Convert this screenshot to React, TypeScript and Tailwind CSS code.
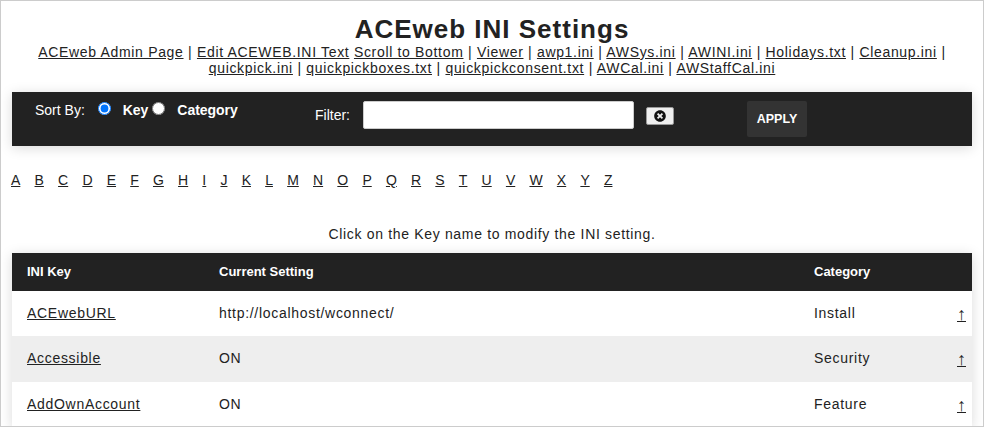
import { FaTimesCircle } from "react-icons/fa";

const moreLinks = [
  "quickpick.ini",
  "quickpickboxes.txt",
  "quickpickconsent.txt",
  "AWCal.ini",
  "AWStaffCal.ini",
];

const letters = "ABCDEFGHIJKLMNOPQRSTUVWXYZ".split("");

const rows = [
  { key: "ACEwebURL", value: "http://localhost/wconnect/", category: "Install", size: "h-[45px] bg-white" },
  { key: "Accessible", value: "ON", category: "Security", size: "h-[46px] pb-[1px] bg-[#eeeeee]" },
  { key: "AddOwnAccount", value: "ON", category: "Feature", size: "h-[45px] bg-white" },
];

export default function App() {
  return (
    <div className="h-[427px] w-[984px] overflow-hidden border border-[#cccccc] bg-white font-['Liberation_Sans',Arial,sans-serif] text-[14px] text-[#222222]">
      {/* Header */}
      <div className="pt-[13px] text-center">
        <h1 className="text-[26px] leading-[30px] font-bold tracking-[1px]">ACEweb INI Settings</h1>
        <div className="px-[20px] text-[14px] leading-[16px] tracking-[0.67px]">
          <a className="underline" href="#">ACEweb Admin Page</a> | <a className="underline" href="#">Edit ACEWEB.INI Text</a>{" "}
          <a className="underline" href="#">Scroll to Bottom</a> | <a className="underline" href="#">Viewer</a> |{" "}
          <a className="underline" href="#">awp1.ini</a> | <a className="underline" href="#">AWSys.ini</a> |{" "}
          <a className="underline" href="#">AWINI.ini</a> | <a className="underline" href="#">Holidays.txt</a> |{" "}
          <a className="underline" href="#">Cleanup.ini</a> |<br />
          {moreLinks.map((name, i) => (
            <span key={name}>
              {i > 0 && " | "}
              <a className="underline" href="#">{name}</a>
            </span>
          ))}
        </div>
      </div>

      {/* Filter bar */}
      <div className="mt-[16px] ml-[11px] flex h-[54px] w-[960px] bg-[#222222] text-white shadow-[0_2px_12px_rgba(0,0,0,0.15)]">
        <div className="ml-[23px] flex h-[36px] w-[280px] items-center text-[14px]">
          <span>Sort By:</span>
          <input type="radio" name="sort" defaultChecked className="ml-[13px] mb-[3px] size-[13px]" />
          <span className="ml-[12px] font-bold tracking-[-0.05px]">Key</span>
          <input type="radio" name="sort" className="ml-[4px] mb-[3px] size-[13px]" />
          <span className="ml-[12px] font-bold tracking-[-0.05px]">Category</span>
        </div>
        <span className="mt-[15px] text-[14px] leading-[16px]">Filter:</span>
        <input type="text" className="mt-[9px] ml-[13px] h-[28px] w-[271px] rounded-[2px] border border-[#cccccc] bg-white" />
        <button className="mt-[15px] ml-[12px] flex h-[18px] w-[28px] items-center justify-center rounded-[2px] border border-[#999999] bg-[#efefef] text-[#111111]">
          <FaTimesCircle className="size-[12px]" />
        </button>
        <button className="mt-[9px] ml-[73px] h-[36px] w-[60px] rounded-[2px] bg-[#333333] text-[12.5px] font-bold text-white">APPLY</button>
      </div>

      {/* Alphabet */}
      <div className="mt-[26px] ml-[10px] flex gap-[14.2px] text-[14px] leading-[16px]">
        {letters.map((l) => (
          <a key={l} className="underline" href="#">{l}</a>
        ))}
      </div>

      <p className="mt-[38px] text-center text-[14px] leading-[16px] tracking-[0.67px]">
        Click on the Key name to modify the INI setting.
      </p>

      {/* Settings table */}
      <div className="mt-[11px] ml-[11px] w-[960px] shadow-[0_2px_12px_rgba(0,0,0,0.15)]">
        <div className="flex h-[38px] items-center bg-[#222222] text-[13px] font-bold text-white">
          <span className="ml-[15px] w-[192px]">INI Key</span>
          <span className="w-[595px]">Current Setting</span>
          <span>Category</span>
        </div>
        {rows.map((row) => (
          <div key={row.key} className={`flex items-center tracking-[0.7px] ${row.size}`}>
            <a className="ml-[15px] w-[192px] underline" href="#">{row.key}</a>
            <span className="w-[595px]">{row.value}</span>
            <span className="w-[143px]">{row.category}</span>
            <a className="mt-[1px] text-[18px] leading-[18px] tracking-normal underline" href="#">↑</a>
          </div>
        ))}
      </div>
    </div>
  );
}
